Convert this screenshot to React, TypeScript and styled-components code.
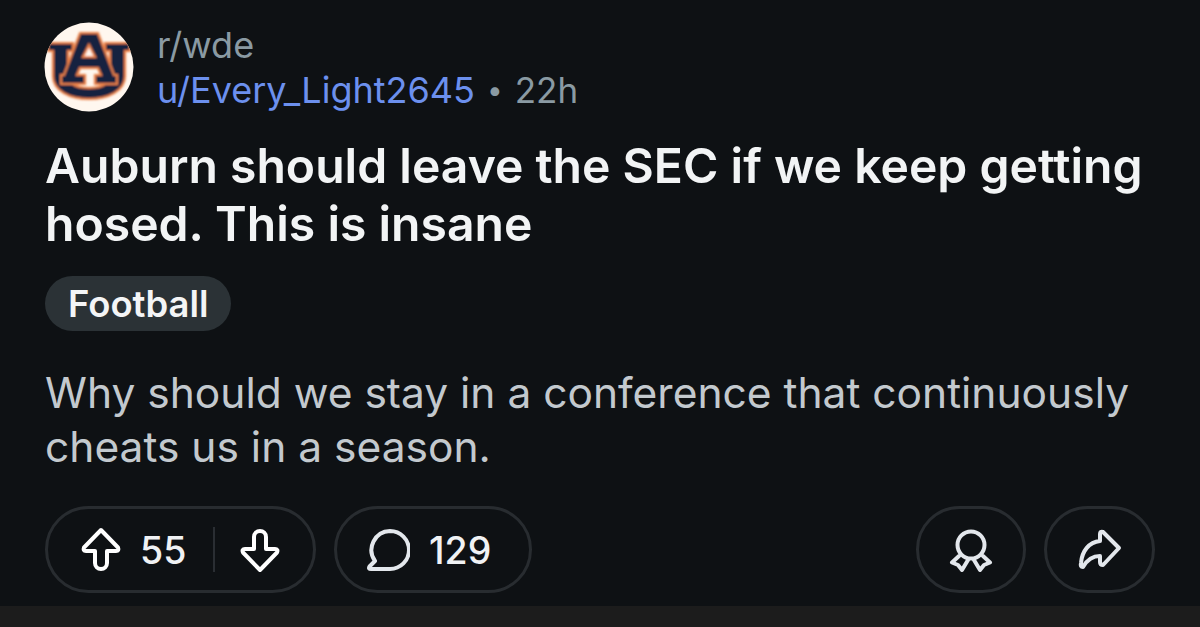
import React from "react";
import styled, { createGlobalStyle } from "styled-components";

const Global = createGlobalStyle`
  html, body { margin: 0; padding: 0; background: #0e1114; }
  body { font-family: Inter, "Liberation Sans", sans-serif; }
`;
const Page = styled.div`
  width: 1200px; height: 627px; display: flex; flex-direction: column; overflow: hidden; background: #0e1114;
`;
const Post = styled.main`
  flex: 1; display: flex; flex-direction: column; padding: 22px 45px 0 44px; box-sizing: border-box;
`;
const Header = styled.header`
  display: flex; align-items: flex-start; gap: 23px; height: 90px;
`;
const Meta = styled.div`
  display: flex; flex-direction: column; font-size: 36px; line-height: 44px; margin-top: 1px;
`;
const Community = styled.div`color: #8a9aa3;`;
const Byline = styled.div`display: flex; align-items: center; color: #8a9aa3; margin-top: 1px;`;
const User = styled.span`color: #6c90ee;`;
const Dot = styled.span`margin: 0 12px; font-size: 28px;`;
const Time = styled.span`font-size: 35px;`;
const Title = styled.h1`
  margin: 25px 0 0 1px; font-size: 48.1px; line-height: 58px; font-weight: 600; color: #f2f4f5;
`;
const Flair = styled.div`
  align-self: flex-start; margin: 23px 0 0 1px; height: 55px; padding: 0 23px; border-radius: 28px; background: #2b3236;
  color: #f4f5f6; font-size: 36.4px; font-weight: 600; display: flex; align-items: center;
`;
const Body = styled.p`
  margin: 35px 0 0 1px; font-size: 42.5px; line-height: 54px; color: #c3c9ce; font-weight: 400;
`;
const Actions = styled.div`
  margin: 32px 0 0 1px; display: flex; gap: 18px;
`;
const Pill = styled.div<{ $w: number; $pad: number }>`
  box-sizing: border-box; height: 87px; width: ${p => p.$w}px; padding-left: ${p => p.$pad}px;
  border: 3px solid #282c30; border-radius: 44px;
  display: flex; align-items: center; color: #f0f2f4; font-size: 37.5px; font-weight: 500;
`;
const Spacer = styled.div`flex: 1;`;
const Count = styled.span<{ $ml: number }>`margin-left: ${p => p.$ml}px; position: relative; top: 1px;`;
const Divider = styled.span`width: 2px; height: 45px; background: #2a2e33; margin: 0 24px 0 27px;`;
const Band = styled.div`height: 21px; background: #1c1c1c;`;

const Logo = () => (
  <svg width="90" height="90" viewBox="0 0 90 90">
    <defs>
      <filter id="soft"><feGaussianBlur stdDeviation="0.8" /></filter>
      <clipPath id="disc"><circle cx="45" cy="45" r="44.5" /></clipPath>
    </defs>
    <circle cx="45" cy="45" r="44.5" fill="#fff7ef" />
    <g clipPath="url(#disc)" filter="url(#soft)" stroke="#ea8047" strokeWidth="2.2" fill="#14233f" strokeLinejoin="miter">
      <path d="M4 21H29V29H24V52C24 62 33 66 45 66C57 66 66 62 66 52V29H61V21H86V29H81V54C81 69 64 77 45 77C26 77 9 69 9 54V29H4Z" />
      <path d="M36 11H54L70 53H73V62H51V53H57L54 46H36L33 53H41V62H17V53H20Z" />
      <path d="M45 23L51 35H39Z" fill="#fff7ef" />
    </g>
  </svg>
);

const Stroke = styled.svg<{ $soft?: boolean }>`
  display: block; fill: none; stroke: currentColor; stroke-width: 4; stroke-linejoin: round; stroke-linecap: round;
  color: ${p => (p.$soft ? "#e3e7ec" : "#ffffff")};
`;

const Up = () => (
  <Stroke width="42" height="46" viewBox="0 0 42 46">
    <path d="M21 3L38 20.500Q39.500 24 36 24H27V36A6 6 0 0 1 15 36V24H6Q2.500 24 4 20.500Z" />
  </Stroke>
);
const Down = () => (
  <Stroke width="42" height="46" viewBox="0 0 42 46">
    <path d="M21 43L38 25.500Q39.500 22 36 22H27V10A6 6 0 0 0 15 10V22H6Q2.500 22 4 25.500Z" />
  </Stroke>
);
const Comment = () => (
  <Stroke $soft width="44" height="44" viewBox="0 0 44 44">
    <path d="M24 3A19 19 0 0 1 24 41H5Q2 41 3.500 38.500L9 33A19 19 0 0 1 24 3Z" />
  </Stroke>
);
const Award = () => (
  <Stroke $soft width="44" height="44" viewBox="0 0 44 44">
    <circle cx="22" cy="17" r="13.500" />
    <path d="M10 28L3 34.500L9 37L13 42L19 32" />
    <path d="M34 28L41 34.500L35 37L31 42L25 32" />
  </Stroke>
);
const Share = () => (
  <Stroke $soft width="44" height="44" viewBox="0 0 44 44">
    <path d="M25 4L41 20L25 37Q22 37 22 34V28C14 28 9 32 5 39Q2 39 3 35C4 23 11 14 22 13V6Q22 3 25 4Z" />
  </Stroke>
);

export default function App() {
  return (
    <Page>
      <Global />
      <Post>
        <Header>
          <Logo />
          <Meta>
            <Community>r/wde</Community>
            <Byline><User>u/Every_Light2645</User><Dot>•</Dot><Time>22h</Time></Byline>
          </Meta>
        </Header>
        <Title>Auburn should leave the SEC if we keep getting<br />hosed. This is insane</Title>
        <Flair>Football</Flair>
        <Body>Why should we stay in a conference that continuously<br />cheats us in a season.</Body>
        <Actions>
          <Pill $w={271} $pad={32}><Up /><Count $ml={18}>55</Count><Divider /><Down /></Pill>
          <Pill $w={198} $pad={29}><Comment /><Count $ml={19}>129</Count></Pill>
          <Spacer />
          <Pill $w={110} $pad={30}><Award /></Pill>
          <Pill $w={111} $pad={31}><Share /></Pill>
        </Actions>
      </Post>
      <Band />
    </Page>
  );
}
